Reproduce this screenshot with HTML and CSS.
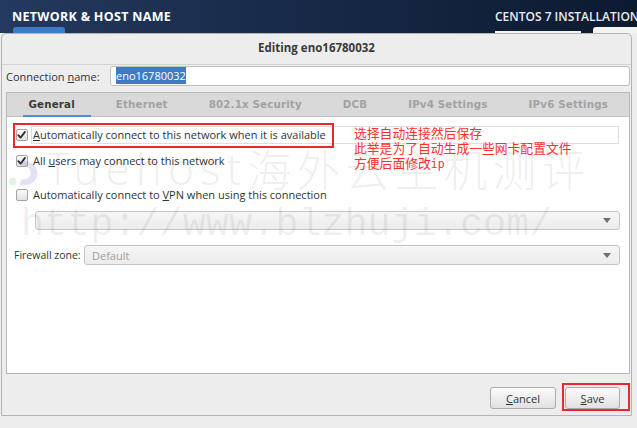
FILE: index.html
```html
<!DOCTYPE html>
<html lang="en">
<head>
<meta charset="utf-8">
<title>Network &amp; Host Name</title>
<link rel="stylesheet" href="styles.css">
</head>
<body>
<div class="screen">
  <header class="hub">
    <div class="hub-left">
      <h1 class="hub-title">NETWORK &amp; HOST NAME</h1>
      <span class="hub-tab"></span>
    </div>
    <div class="hub-right">
      <div class="hub-product">CENTOS 7 INSTALLATION</div>
      <div class="hub-slots"><span class="slot slot-a"></span><span class="slot slot-b"></span></div>
    </div>
  </header>

  <div class="dialog">
    <div class="titlebar">Editing eno16780032</div>

    <div class="conn-row">
      <label class="conn-label">Connection <u>n</u>ame:</label>
      <div class="entry"><span class="sel">eno16780032</span></div>
    </div>

    <div class="notebook">
      <div class="tabs">
        <span class="tab active">General</span>
        <span class="tab">Ethernet</span>
        <span class="tab">802.1x Security</span>
        <span class="tab">DCB</span>
        <span class="tab">IPv4 Settings</span>
        <span class="tab">IPv6 Settings</span>
      </div>
      <div class="page">
        <div class="check-row row-1">
          <span class="cb checked"><svg viewBox="0 0 12 12"><path d="M2.5 6.2 L5 8.8 L9.8 2.6" /></svg></span>
          <span class="cb-label focus"><u>A</u>utomatically connect to this network when it is available</span>
        </div>
        <div class="check-row row-2">
          <span class="cb checked"><svg viewBox="0 0 12 12"><path d="M2.5 6.2 L5 8.8 L9.8 2.6" /></svg></span>
          <span class="cb-label">All <u>u</u>sers may connect to this network</span>
        </div>
        <div class="check-row row-3">
          <span class="cb"></span>
          <span class="cb-label">Automatically connect to <u>V</u>PN when using this connection</span>
        </div>
        <div class="combo vpn-combo">
          <span class="combo-text"></span>
          <svg class="arrow" viewBox="0 0 8 5"><polygon points="0,0 8,0 4,5" /></svg>
        </div>
        <div class="fw-row">
          <span class="fw-label">Firewall zone:</span>
          <div class="combo fw-combo">
            <span class="combo-text">Default</span>
            <svg class="arrow" viewBox="0 0 8 5"><polygon points="0,0 8,0 4,5" /></svg>
          </div>
        </div>
      </div>
    </div>

    <div class="actions">
      <button class="btn btn-cancel"><u>C</u>ancel</button>
      <button class="btn btn-save"><u>S</u>ave</button>
    </div>
  </div>

  <div class="callout callout-auto"></div>
  <div class="callout callout-save"></div>

  <div class="note">
    <div>选择自动连接然后保存</div>
    <div>此举是为了自动生成一些网卡配置文件</div>
    <div>方便后面修改<span class="mono">ip</span></div>
  </div>

  <div class="wm wm-brand">
    <svg class="wm-logo" viewBox="0 0 36 30"><path d="M14 2 C26 2 32 9 31 17 C30 25 22 29 12 28 L14 22 C21 22 24 19 24 15 C24 10 20 7 14 7 Z" /><circle class="dot" cx="5" cy="24" r="4" /></svg>
    <span class="wm-latin">Tuehost</span><span class="wm-cjk">海外云主机测评</span>
  </div>
  <div class="wm wm-url">http://www.blzhuji.com/</div>
</div>
</body>
</html>
```

FILE: styles.css
```css
* { box-sizing: border-box; }
html, body { margin: 0; padding: 0; }
body {
  width: 637px;
  height: 428px;
  overflow: hidden;
  background: #ededed;
  font-family: "Open Sans", "DejaVu Sans", sans-serif;
  font-size: 11px;
  color: #2e3436;
}
.screen {
  position: relative;
  width: 637px;
  height: 428px;
  overflow: hidden;
}

/* top hub bar */
.hub {
  height: 33px;
  background: linear-gradient(90deg, #24395e 0%, #182a49 45%, #0c1a2f 100%);
  display: flex;
  justify-content: space-between;
}
.hub-left {
  display: flex;
  flex-direction: column;
  padding-left: 12px;
}
.hub-title {
  margin: 0;
  padding-top: 9px;
  font-size: 12.5px;
  font-weight: 700;
  color: #ffffff;
  line-height: 16px;
  letter-spacing: 0.3px;
}
.hub-tab {
  display: block;
  width: 52px;
  height: 6px;
  margin-top: 2px;
  margin-left: 1px;
  background: #3c7dc8;
  border-radius: 3px 3px 0 0;
}
.hub-right {
  width: 142px;
  display: flex;
  flex-direction: column;
  overflow: hidden;
}
.hub-product {
  padding-top: 9px;
  font-size: 12px;
  line-height: 16px;
  font-weight: 600;
  color: #e8ecf2;
  white-space: nowrap;
}
.hub-slots {
  display: flex;
  align-items: flex-end;
  height: 8px;
  gap: 12px;
}
.slot { display: block; background: #f4f4f4; }
.slot-a { width: 86px; height: 2px; }
.slot-b { width: 44px; height: 6px; border-radius: 3px 0 0 0; }

/* dialog */
.dialog {
  margin-left: 1px;
  width: 631px;
  height: 383px;
  background: #ededed;
  border: 1px solid #b4b4b4;
  border-radius: 5px 5px 0 0;
  display: flex;
  flex-direction: column;
}
.titlebar {
  height: 31px;
  border-bottom: 1px solid #d2d2d2;
  text-align: center;
  font-weight: 700;
  font-size: 11.5px;
  line-height: 28px;
  color: #3a3a3a;
}
.conn-row {
  display: flex;
  align-items: center;
  margin-top: 1px;
  padding: 0 1px 0 4px;
}
.conn-label {
  flex: 0 0 104px;
  color: #2e3436;
}
.entry {
  flex: 1;
  height: 20px;
  background: #ffffff;
  border: 1px solid #bfbfbf;
  border-radius: 3px;
  padding: 1px 5px;
  line-height: 16px;
}
.sel {
  background: #3d7bc6;
  color: #ffffff;
  padding: 1px 0;
}

/* notebook */
.notebook {
  margin: 6px 1px 0 4px;
  border: 1px solid #b8b8b8;
  height: 282px;
  display: flex;
  flex-direction: column;
}
.tabs {
  height: 24px;
  background: #d9d9d9;
  border-bottom: 1px solid #c2c2c2;
  display: flex;
  padding-left: 1px;
}
.tab {
  position: relative;
  padding: 0 20.5px;
  font-family: "DejaVu Sans", sans-serif;
  font-size: 10.3px;
  letter-spacing: 0.15px;
  font-weight: 700;
  line-height: 23px;
  color: #a2a2a2;
  white-space: nowrap;
}
.tab.active { color: #3b3b3b; }
.tab.active::after {
  content: "";
  position: absolute;
  left: 15px;
  right: 4px;
  bottom: -1px;
  height: 2px;
  background: #4a90d9;
}
.page {
  flex: 1;
  background: #ffffff;
  padding: 9px 9px 0 9px;
  display: flex;
  flex-direction: column;
}
.check-row {
  display: flex;
  align-items: center;
  height: 18px;
}
.row-2 { margin-top: 8px; }
.row-3 { margin-top: 16px; }
.cb {
  flex: 0 0 12px;
  width: 12px;
  height: 12px;
  margin-right: 5px;
  border: 1px solid #a4a4a4;
  border-radius: 2px;
  background: linear-gradient(#fafafa, #e2e2e2);
  display: flex;
}
.cb svg { width: 12px; height: 12px; margin: -1px 0 0 -1px; }
.cb path {
  fill: none;
  stroke: #2f2f2f;
  stroke-width: 2;
  stroke-linecap: round;
  stroke-linejoin: round;
}
.cb-label { white-space: nowrap; line-height: 16px; }
.cb-label.focus {
  flex: 1;
  margin-right: 1px;
  border: 1px solid #dedede;
  padding: 0 1px;
  margin-left: -2px;
}
.combo {
  height: 20px;
  border: 1px solid #c6c6c6;
  border-radius: 3px;
  background: linear-gradient(#f6f6f6, #ececec);
  display: flex;
  align-items: center;
  justify-content: space-between;
  padding: 0 8px 0 7px;
}
.combo-text { color: #a0a0a0; }
.arrow { width: 8px; height: 5px; }
.arrow polygon { fill: #6f6f6f; }
.vpn-combo { margin: 7px 0 0 19px; height: 19px; }
.fw-row {
  display: flex;
  align-items: center;
  margin-top: 15px;
}
.fw-label {
  flex: 0 0 70px;
  margin-left: -2px;
  color: #2e3436;
  font-size: 10.5px;
}
.fw-combo { flex: 1; }

/* buttons */
.actions {
  flex: 1;
  display: flex;
  justify-content: flex-end;
  align-items: flex-start;
  padding: 13px 11px 0 0;
  gap: 9px;
}
.btn {
  height: 22px;
  font-family: "Open Sans", "DejaVu Sans", sans-serif;
  font-size: 11px;
  color: #2e3436;
  background: linear-gradient(#fbfbfb, #e1e1e1);
  border: 1px solid #acacac;
  border-radius: 3px;
  padding: 0;
}
.btn-cancel { width: 66px; }
.btn-save { width: 55px; }

/* annotations overlay */
.callout {
  position: absolute;
  border: 2px solid #e8282c;
}
.callout-auto { left: 13px; top: 123px; width: 321px; height: 25px; }
.callout-save { left: 562px; top: 383px; width: 68px; height: 28px; }
.note {
  position: absolute;
  left: 354px;
  top: 125px;
  font-family: "Noto Sans CJK SC", sans-serif;
  font-size: 12.8px;
  line-height: 15px;
  color: #ff2f2f;
}
.mono { font-family: "DejaVu Sans Mono", monospace; font-size: 11.5px; }

/* watermark */
.wm {
  position: absolute;
  pointer-events: none;
  white-space: nowrap;
  color: rgba(0, 0, 0, 0.085);
}
.wm-brand {
  left: 8px;
  top: 146px;
  display: flex;
  align-items: center;
  font-family: "Noto Sans CJK SC", sans-serif;
  font-weight: 300;
  font-size: 44px;
  line-height: 44px;
}
.wm-logo { width: 34px; height: 30px; margin-right: 4px; margin-top: 10px; }
.wm-logo path { fill: rgba(110, 90, 200, 0.18); }
.wm-logo .dot { fill: rgba(80, 180, 90, 0.16); }
.wm-latin { letter-spacing: 6px; font-family: "Noto Sans", sans-serif; font-weight: 300; }
.wm-cjk { letter-spacing: 5px; margin-left: 0; }
.wm-url {
  left: 21px;
  top: 206px;
  font-family: "Liberation Mono", monospace;
  font-size: 38.5px;
  line-height: 38px;
  color: rgba(0, 0, 0, 0.07);
}
```
